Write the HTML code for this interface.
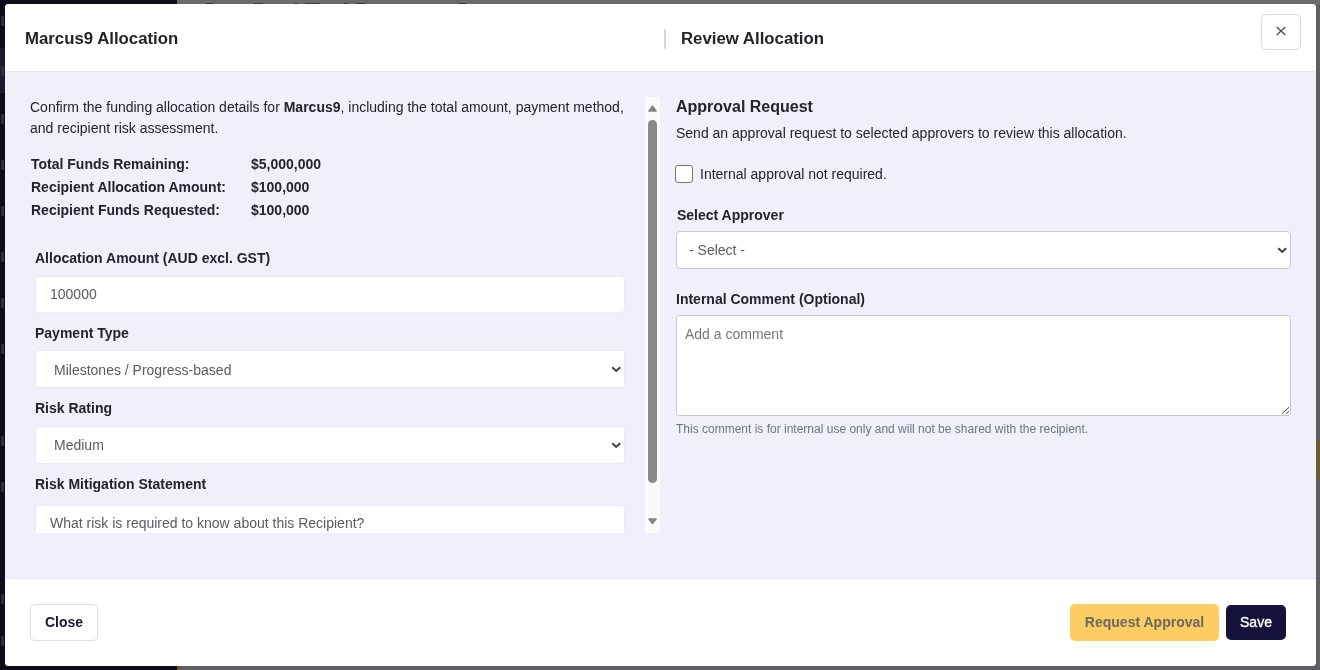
<!DOCTYPE html>
<html>
<head>
<meta charset="utf-8">
<title>Allocation</title>
<style>
*{box-sizing:border-box;margin:0;padding:0}
html,body{width:1320px;height:670px;overflow:hidden}
body{font-family:"Liberation Sans",sans-serif;font-size:14px;color:#212529;background:#5f5f63;position:relative}
.side{position:absolute;left:0;top:0;width:177px;height:670px;background:#0c0c1b}
.modal{will-change:transform;position:absolute;left:5px;top:4px;width:1311px;height:662px;background:#fff;border-radius:4px;overflow:hidden}
.hdr{position:absolute;left:0;top:0;width:100%;height:68px;background:#fff;border-bottom:1px solid #e6e6ee}
.ttl{position:absolute;top:24px;font-size:16.8px;font-weight:bold;line-height:22px;color:#212529;white-space:nowrap}
.vdiv{position:absolute;left:659px;top:25px;width:2px;height:20px;background:#d9d9dc}
.xbtn{position:absolute;left:1256px;top:10px;width:40px;height:36px;border:1px solid #dcdcdf;border-radius:5px;background:#fff}
.xbtn svg{position:absolute;left:13.9px;top:11.3px}
.bdy{position:absolute;left:0;top:68px;width:100%;height:506px;background:#f0f0fa}
.ftr{position:absolute;left:0;top:574px;width:100%;height:88px;background:#fff;border-top:1px solid #e9e9f0}
.abs{position:absolute;white-space:nowrap}
.b{font-weight:bold}
.lbl{position:absolute;font-weight:bold;font-size:14px;line-height:18px;white-space:nowrap;color:#212529}
.inp{position:absolute;background:#fff;border:1px solid #ebebf3;border-radius:4px;color:#5b5b61;font-size:14px;white-space:nowrap}
.inp span{position:absolute;left:15px;top:0}
.chev{position:absolute}
.btn{position:absolute;border-radius:5px;font-size:14px;font-weight:bold;text-align:center;white-space:nowrap}
</style>
</head>
<body>
<div class="side"><div style="position:absolute;left:0;top:48px;width:177px;height:45px;background:#1b1a2e"></div><div style="position:absolute;left:1px;top:16px;width:3px;height:10px;background:#2f2f3d;border-radius:1px"></div><div style="position:absolute;left:1px;top:66px;width:3px;height:10px;background:#2f2f3d;border-radius:1px"></div><div style="position:absolute;left:1px;top:114px;width:3px;height:10px;background:#2f2f3d;border-radius:1px"></div><div style="position:absolute;left:1px;top:160px;width:3px;height:10px;background:#2f2f3d;border-radius:1px"></div><div style="position:absolute;left:1px;top:206px;width:3px;height:10px;background:#2f2f3d;border-radius:1px"></div><div style="position:absolute;left:1px;top:252px;width:3px;height:10px;background:#2f2f3d;border-radius:1px"></div><div style="position:absolute;left:1px;top:298px;width:3px;height:10px;background:#2f2f3d;border-radius:1px"></div><div style="position:absolute;left:1px;top:344px;width:3px;height:10px;background:#2f2f3d;border-radius:1px"></div><div style="position:absolute;left:1px;top:436px;width:3px;height:10px;background:#2f2f3d;border-radius:1px"></div><div style="position:absolute;left:1px;top:482px;width:3px;height:10px;background:#2f2f3d;border-radius:1px"></div><div style="position:absolute;left:1px;top:594px;width:3px;height:10px;background:#2f2f3d;border-radius:1px"></div><div style="position:absolute;left:1px;top:636px;width:3px;height:10px;background:#2f2f3d;border-radius:1px"></div></div>
<div style="position:absolute;left:177px;top:666px;width:3px;height:4px;background:#6a5b2c"></div>
<div style="position:absolute;left:177px;top:0;width:1143px;height:5px;background:#6b6b6b"></div>
<div style="position:absolute;left:205px;top:3px;width:9px;height:1.5px;background:#3a3a3c;border-radius:1px"></div><div style="position:absolute;left:253px;top:3px;width:10px;height:1.5px;background:#3a3a3c;border-radius:1px"></div><div style="position:absolute;left:294px;top:3px;width:4px;height:1.5px;background:#3a3a3c;border-radius:1px"></div><div style="position:absolute;left:305px;top:3px;width:15px;height:1.5px;background:#3a3a3c;border-radius:1px"></div><div style="position:absolute;left:344px;top:3px;width:4px;height:1.5px;background:#3a3a3c;border-radius:1px"></div><div style="position:absolute;left:356px;top:3px;width:10px;height:1.5px;background:#3a3a3c;border-radius:1px"></div><div style="position:absolute;left:458px;top:3px;width:9px;height:1.5px;background:#3a3a3c;border-radius:1px"></div>
<div style="position:absolute;left:1314px;top:440px;width:6px;height:39px;background:#6a5b2c"></div>
<div class="modal">
  <div class="hdr">
    <div class="ttl" style="left:20px">Marcus9 Allocation</div>
    <div class="vdiv"></div>
    <div class="ttl" style="left:676px">Review Allocation</div>
    <div class="xbtn"><svg width="10" height="10" viewBox="0 0 10 10"><path d="M0.7 1 L9.3 9 M9.3 1 L0.7 9" stroke="#4d4d5c" stroke-width="1.35" fill="none"/></svg></div>
  </div>
  <div class="bdy">
    <!-- LEFT -->
    <div class="abs" style="left:25px;top:25px;line-height:21px;white-space:normal;width:610px">Confirm the funding allocation details for <b>Marcus9</b>, including the total amount, payment method, and recipient risk assessment.</div>
    <div class="abs b" style="left:26px;top:84px">Total Funds Remaining:</div>
    <div class="abs b" style="left:246px;top:84px">$5,000,000</div>
    <div class="abs b" style="left:26px;top:107px">Recipient Allocation Amount:</div>
    <div class="abs b" style="left:246px;top:107px">$100,000</div>
    <div class="abs b" style="left:26px;top:130px">Recipient Funds Requested:</div>
    <div class="abs b" style="left:246px;top:130px">$100,000</div>

    <div class="lbl" style="left:30px;top:177px">Allocation Amount (AUD excl. GST)</div>
    <div class="inp" style="left:30px;top:204px;width:590px;height:37px;line-height:35px"><span style="left:14px">100000</span></div>
    <div class="lbl" style="left:30px;top:252px">Payment Type</div>
    <div class="inp" style="left:30px;top:278px;width:590px;height:38px;border-radius:3px;line-height:39px"><span style="left:18px">Milestones / Progress-based</span><svg class="chev" style="left:575px;top:14.7px" width="11" height="8" viewBox="0 0 11 8"><path d="M1.2 1.3 L5.2 5 L9.2 1.3" stroke="#3f3f47" stroke-width="2" fill="none"/></svg></div>
    <div class="lbl" style="left:30px;top:327px">Risk Rating</div>
    <div class="inp" style="left:30px;top:354px;width:590px;height:38px;border-radius:3px;line-height:37px"><span style="left:18px">Medium</span><svg class="chev" style="left:575px;top:14.7px" width="11" height="8" viewBox="0 0 11 8"><path d="M1.2 1.3 L5.2 5 L9.2 1.3" stroke="#3f3f47" stroke-width="2" fill="none"/></svg></div>
    <div class="lbl" style="left:30px;top:403px">Risk Mitigation Statement</div>
    <div class="inp" style="left:30px;top:433px;width:590px;height:28px;line-height:35px;border-bottom:none;border-radius:4px 4px 0 0;overflow:hidden"><span style="left:14px">What risk is required to know about this Recipient?</span></div>

    <!-- scrollbar -->
    <div class="abs" style="left:640px;top:25px;width:15px;height:436px;background:#fafafa"></div>
    <div class="abs" style="left:643px;top:48px;width:9px;height:363px;background:#8a8a8a;border-radius:5px"></div>
    <svg class="abs" style="left:642px;top:32px" width="11" height="9" viewBox="0 0 11 9"><path d="M2 7 L5.5 2.2 L9 7 Z" fill="#858585" stroke="#858585" stroke-width="1.6" stroke-linejoin="round"/></svg>
    <svg class="abs" style="left:642px;top:445px" width="11" height="9" viewBox="0 0 11 9"><path d="M2 2 L5.5 6.6 L9 2 Z" fill="#858585" stroke="#858585" stroke-width="1.6" stroke-linejoin="round"/></svg>

    <!-- RIGHT -->
    <div class="abs b" style="left:671px;top:25px;font-size:16px;line-height:20px">Approval Request</div>
    <div class="abs" style="left:671px;top:52px;line-height:18px">Send an approval request to selected approvers to review this allocation.</div>
    <div class="abs" style="left:670px;top:93px;width:18px;height:18px;border:1.5px solid #737373;border-radius:3px;background:#fff"></div>
    <div class="abs" style="left:695px;top:93px;line-height:18px">Internal approval not required.</div>
    <div class="lbl" style="left:672px;top:134px">Select Approver</div>
    <div class="inp" style="left:671px;top:159px;width:615px;height:38px;line-height:36px;border-color:#c8c8cb"><span style="left:12px">- Select -</span><svg class="chev" style="left:600px;top:15px" width="11" height="8" viewBox="0 0 11 8"><path d="M1.2 1.3 L5.2 5 L9.2 1.3" stroke="#3f3f47" stroke-width="2" fill="none"/></svg></div>
    <div class="lbl" style="left:671px;top:218px">Internal Comment (Optional)</div>
    <div class="inp" style="left:671px;top:243px;width:615px;height:101px;border-color:#c8c8cb;border-radius:3px;line-height:18px"><svg class="chev" style="left:599px;top:85px" width="14" height="14" viewBox="0 0 14 14"><path d="M6 12.6 L13 6.3 M10.1 12.7 L13 10.2" stroke="#4a4a4a" stroke-width="1" fill="none"/></svg><span style="left:8px;top:9px;color:#77777c;font-size:14px">Add a comment</span></div>
    <div class="abs" style="left:671px;top:349px;font-size:12px;line-height:16px;color:#6c757d">This comment is for internal use only and will not be shared with the recipient.</div>
  </div>
  <div class="ftr">
    <div class="btn" style="left:25px;top:25px;width:68px;height:37px;line-height:35px;border:1px solid #dedee3;background:#fff;color:#15152b">Close</div>
    <div class="btn" style="left:1065px;top:25px;width:149px;height:37px;line-height:37px;background:#fccd65;color:#70675c">Request Approval</div>
    <div class="btn" style="left:1221px;top:26px;width:60px;height:35px;line-height:35px;background:#15123a;color:#fff;font-weight:normal;-webkit-text-stroke:0.35px #fff">Save</div>
  </div>
</div>
</body>
</html>
